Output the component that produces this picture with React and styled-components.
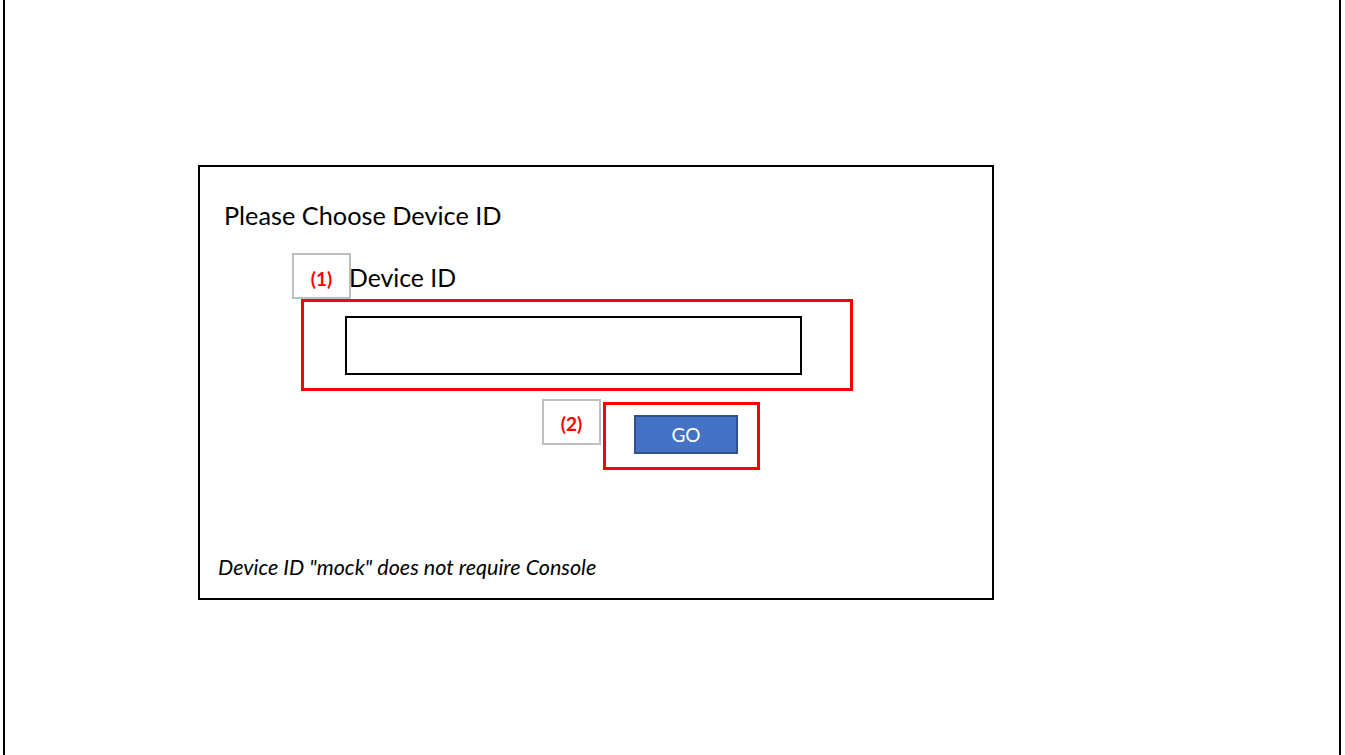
import styled, { createGlobalStyle } from "styled-components";

const GlobalStyle = createGlobalStyle`
    html, body {
        margin: 0;
        padding: 0;
        background: #ffffff;
        font-family: Lato, "Open Sans", sans-serif;
        color: #000000;
    }
`;

const Page = styled.div`
    box-sizing: border-box;
    width: 1338px;
    height: 755px;
    margin-left: 3px;
    border-left: 2px solid #000;
    border-right: 2px solid #000;
    padding-top: 165px;
    padding-left: 193px;
`;

const Dialog = styled.div`
    box-sizing: border-box;
    width: 796px;
    height: 435px;
    border: 2px solid #000;
    display: flex;
    flex-direction: column;
`;

const Title = styled.div`
    margin: 33px 0 0 24px;
    font-size: 25.3px;
    line-height: 30px;
`;

const LabelRow = styled.div`
    display: flex;
    align-items: center;
    margin: 23px 0 0 92px;
`;

// numbered annotation tag, $drop nudges the number down
const Badge = styled.div`
    box-sizing: border-box;
    width: 59px;
    height: 46px;
    border: 2px solid #bfbfbf;
    display: flex;
    align-items: center;
    justify-content: center;
    color: #ff0000;
    font-weight: 700;
    font-size: 19px;
    padding-top: ${(p) => p.$drop}px;
`;

const Label = styled.div`
    font-size: 24.8px;
    line-height: 30px;
    margin: 4px 0 0 -2px;
`;

const RedFrame = styled.div`
    box-sizing: border-box;
    border: 3px solid #ff0000;
    width: ${(p) => p.$w}px;
    height: ${(p) => p.$h}px;
    padding: ${(p) => p.$pad};
`;

const FieldFrame = styled(RedFrame)`
    margin: 0 0 0 101px;
`;

const Input = styled.div`
    box-sizing: border-box;
    width: 457px;
    height: 59px;
    border: 2px solid #000;
`;

const ButtonRow = styled.div`
    display: flex;
    align-items: flex-start;
    margin: 8px 0 0 342px;
    gap: 2px;
`;

const ButtonFrame = styled(RedFrame)`
    margin-top: 3px;
`;

const GoButton = styled.div`
    box-sizing: border-box;
    width: 104px;
    height: 39px;
    background: #4472c4;
    border: 2px solid #2f528f;
    color: #ffffff;
    font-size: 19px;
    display: flex;
    align-items: center;
    justify-content: center;
`;

const Note = styled.div`
    margin: auto 0 18px 18px;
    font-size: 21.5px;
    font-style: italic;
`;

function App() {
    return (
        <>
            <GlobalStyle />
            <Page>
                <Dialog>
                    <Title>Please Choose Device ID</Title>
                    <LabelRow>
                        <Badge $drop={5}>(1)</Badge>
                        <Label>Device ID</Label>
                    </LabelRow>
                    <FieldFrame $w={552} $h={92} $pad="14px 0 0 41px">
                        <Input />
                    </FieldFrame>
                    <ButtonRow>
                        <Badge $drop={2}>(2)</Badge>
                        <ButtonFrame $w={157} $h={68} $pad="10px 0 0 28px">
                            <GoButton>GO</GoButton>
                        </ButtonFrame>
                    </ButtonRow>
                    <Note>Device ID "mock" does not require Console</Note>
                </Dialog>
            </Page>
        </>
    );
}

export default App;
